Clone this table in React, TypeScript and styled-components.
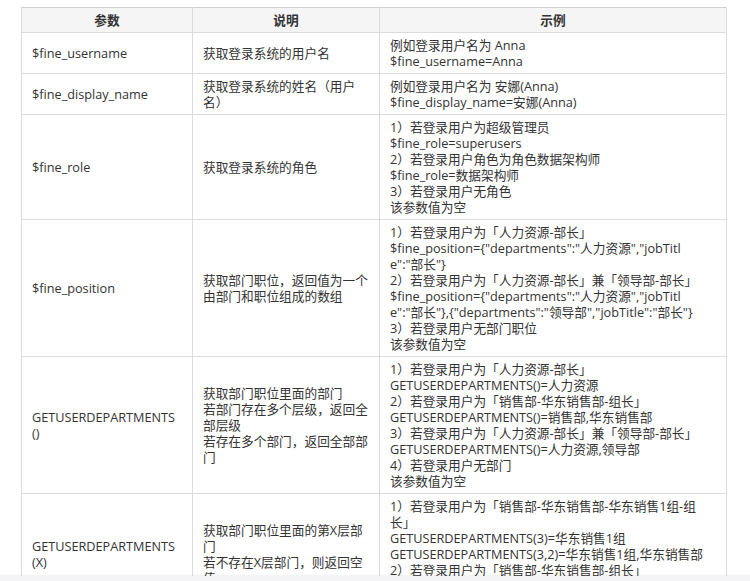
import React from "react";
import styled, { createGlobalStyle } from "styled-components";

const GlobalStyle = createGlobalStyle`
  html, body { margin: 0; padding: 0; background: #ffffff; }
  body {
    font-family: "Open Sans", "Noto Sans CJK SC", sans-serif;
    color: #333333;
  }
`;

const Page = styled.div`
  height: 581px;
  display: flex;
  flex-direction: column;
  overflow: hidden;
`;

const Scroller = styled.div`
  flex: 1;
  overflow: hidden;
  padding: 7px 0 0 21px;
`;

const BottomBar = styled.div`
  height: 5px;
  flex: none;
  background: #f4f4f6;
  box-shadow: 0 -1px 2px rgba(0, 0, 0, 0.06);
`;

const Table = styled.table`
  border-collapse: collapse;
  table-layout: fixed;
  width: 705px;
  font-size: 12.7px;
  line-height: 16px;
`;

const Col = styled.col<{ $w: number }>`
  width: ${(p) => p.$w}px;
`;

const Th = styled.th`
  background: #f5f5f5;
  border: 1px solid #dcdcdc;
  border-top-color: #cfcfcf;
  padding: 4px 10px;
  font-weight: bold;
  text-align: center;
  color: #333;
`;

const Td = styled.td`
  border: 1px solid #dcdcdc;
  padding: 4px 10px;
  vertical-align: middle;
  text-align: left;
`;

const Line = styled.span`
  display: block;
  white-space: nowrap;
`;

const Lines = ({ lines }: { lines: string[] }) => (
  <>
    {lines.map((l, i) => (
      <Line key={i}>{l}</Line>
    ))}
  </>
);

type Row = { p: string[]; d: string[]; e: string[] };

const rows: Row[] = [
  {
    p: ["$fine_username"],
    d: ["获取登录系统的用户名"],
    e: ["例如登录用户名为 Anna", "$fine_username=Anna"],
  },
  {
    p: ["$fine_display_name"],
    d: ["获取登录系统的姓名（用户", "名）"],
    e: ["例如登录用户名为 安娜(Anna)", "$fine_display_name=安娜(Anna)"],
  },
  {
    p: ["$fine_role"],
    d: ["获取登录系统的角色"],
    e: [
      "1）若登录用户为超级管理员",
      "$fine_role=superusers",
      "2）若登录用户角色为角色数据架构师",
      "$fine_role=数据架构师",
      "3）若登录用户无角色",
      "该参数值为空",
    ],
  },
  {
    p: ["$fine_position"],
    d: ["获取部门职位，返回值为一个", "由部门和职位组成的数组"],
    e: [
      "1）若登录用户为「人力资源-部长」",
      '$fine_position={"departments":"人力资源","jobTitl',
      'e":"部长"}',
      "2）若登录用户为「人力资源-部长」兼「领导部-部长」",
      '$fine_position={"departments":"人力资源","jobTitl',
      'e":"部长"},{"departments":"领导部","jobTitle":"部长"}',
      "3）若登录用户无部门职位",
      "该参数值为空",
    ],
  },
  {
    p: ["GETUSERDEPARTMENTS", "()"],
    d: [
      "获取部门职位里面的部门",
      "若部门存在多个层级，返回全",
      "部层级",
      "若存在多个部门，返回全部部",
      "门",
    ],
    e: [
      "1）若登录用户为「人力资源-部长」",
      "GETUSERDEPARTMENTS()=人力资源",
      "2）若登录用户为「销售部-华东销售部-组长」",
      "GETUSERDEPARTMENTS()=销售部,华东销售部",
      "3）若登录用户为「人力资源-部长」兼「领导部-部长」",
      "GETUSERDEPARTMENTS()=人力资源,领导部",
      "4）若登录用户无部门",
      "该参数值为空",
    ],
  },
  {
    p: ["GETUSERDEPARTMENTS", "(X)"],
    d: ["获取部门职位里面的第X层部", "门", "若不存在X层部门，则返回空", "值"],
    e: [
      "1）若登录用户为「销售部-华东销售部-华东销售1组-组",
      "长」",
      "GETUSERDEPARTMENTS(3)=华东销售1组",
      "GETUSERDEPARTMENTS(3,2)=华东销售1组,华东销售部",
      "2）若登录用户为「销售部-华东销售部-组长」",
      "GETUSERDEPARTMENTS(3)=",
      "该参数值为空",
    ],
  },
];

export default function App() {
  return (
    <>
      <GlobalStyle />
      <Page>
        <Scroller>
          <Table>
            <colgroup>
              <Col $w={171} />
              <Col $w={187} />
              <Col $w={347} />
            </colgroup>
            <thead>
              <tr>
                <Th>参数</Th>
                <Th>说明</Th>
                <Th>示例</Th>
              </tr>
            </thead>
            <tbody>
              {rows.map((r, i) => (
                <tr key={i}>
                  <Td>
                    <Lines lines={r.p} />
                  </Td>
                  <Td>
                    <Lines lines={r.d} />
                  </Td>
                  <Td>
                    <Lines lines={r.e} />
                  </Td>
                </tr>
              ))}
            </tbody>
          </Table>
        </Scroller>
        <BottomBar />
      </Page>
    </>
  );
}
